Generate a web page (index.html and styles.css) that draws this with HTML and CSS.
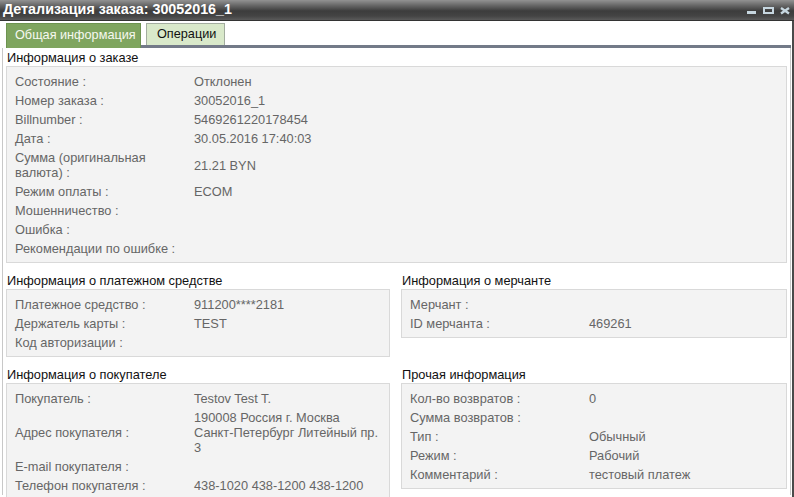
FILE: index.html
```html
<!DOCTYPE html>
<html lang="ru">
<head>
<meta charset="utf-8">
<title>Детализация заказа</title>
<link rel="stylesheet" href="styles.css">
</head>
<body>
<div class="window">
  <div class="titlebar">
    <span class="title">Детализация заказа: 30052016_1</span>
    <svg class="controls" width="48" height="20" viewBox="0 0 48 20">
      <rect x="2" y="11" width="9" height="3" fill="#c6d6df"/>
      <rect x="19" y="8" width="9" height="5" fill="none" stroke="#c6d6df" stroke-width="2"/>
      <path d="M36 8 L44 13.5 M44 8 L36 13.5" stroke="#c6d6df" stroke-width="2.4" fill="none"/>
    </svg>
  </div>
  <div class="body">
    <div class="tabstrip">
      <div class="tab-lead"></div>
      <div class="tab tab-active">Общая информация</div>
      <div class="tab-rest">
        <div class="tab-row">
          <div class="tab tab-idle">Операции</div>
        </div>
        <div class="tab-line"></div>
      </div>
    </div>
    <div class="content">
      <div class="section">
        <div class="section-title">Информация о заказе</div>
        <div class="box">
          <div class="row"><div class="label">Состояние :</div><div class="value">Отклонен</div></div>
          <div class="row"><div class="label">Номер заказа :</div><div class="value">30052016_1</div></div>
          <div class="row"><div class="label">Billnumber :</div><div class="value">5469261220178454</div></div>
          <div class="row"><div class="label">Дата :</div><div class="value">30.05.2016 17:40:03</div></div>
          <div class="row"><div class="label">Сумма (оригинальная валюта) :</div><div class="value">21.21 BYN</div></div>
          <div class="row"><div class="label">Режим оплаты :</div><div class="value">ECOM</div></div>
          <div class="row"><div class="label">Мошенничество :</div><div class="value"></div></div>
          <div class="row"><div class="label">Ошибка :</div><div class="value"></div></div>
          <div class="row"><div class="label">Рекомендации по ошибке :</div><div class="value"></div></div>
        </div>
      </div>
      <div class="cols">
        <div class="section">
          <div class="section-title">Информация о платежном средстве</div>
          <div class="box">
            <div class="row"><div class="label">Платежное средство :</div><div class="value">911200****2181</div></div>
            <div class="row"><div class="label">Держатель карты :</div><div class="value">TEST</div></div>
            <div class="row"><div class="label">Код авторизации :</div><div class="value"></div></div>
          </div>
        </div>
        <div class="section">
          <div class="section-title">Информация о мерчанте</div>
          <div class="box">
            <div class="row"><div class="label">Мерчант :</div><div class="value"></div></div>
            <div class="row"><div class="label">ID мерчанта :</div><div class="value">469261</div></div>
          </div>
        </div>
        <div class="section">
          <div class="section-title">Информация о покупателе</div>
          <div class="box">
            <div class="row"><div class="label">Покупатель :</div><div class="value">Testov Test T.</div></div>
            <div class="row"><div class="label">Адрес покупателя :</div><div class="value">190008 Россия г. Москва<br>Санкт-Петербург Литейный пр.<br>3</div></div>
            <div class="row"><div class="label">E-mail покупателя :</div><div class="value"></div></div>
            <div class="row"><div class="label">Телефон покупателя :</div><div class="value">438-1020 438-1200 438-1200</div></div>
          </div>
        </div>
        <div class="section">
          <div class="section-title">Прочая информация</div>
          <div class="box">
            <div class="row"><div class="label">Кол-во возвратов :</div><div class="value">0</div></div>
            <div class="row"><div class="label">Сумма возвратов :</div><div class="value"></div></div>
            <div class="row"><div class="label">Тип :</div><div class="value">Обычный</div></div>
            <div class="row"><div class="label">Режим :</div><div class="value">Рабочий</div></div>
            <div class="row"><div class="label">Комментарий :</div><div class="value">тестовый платеж</div></div>
          </div>
        </div>
      </div>
    </div>
  </div>
</div>
</body>
</html>
```
FILE: styles.css
```css
html, body {
  margin: 0;
  padding: 0;
  background: #fff;
}
body {
  font-family: "Liberation Sans", Arial, sans-serif;
}
.window {
  width: 794px;
  height: 497px;
  overflow: hidden;
  background: #fff;
}
.titlebar {
  height: 20px;
  display: flex;
  align-items: flex-start;
  background: linear-gradient(#929292 0%, #6a6a6a 25%, #3c3c3c 55%, #444 80%, #5a5a5a 100%);
  border-bottom: 1px solid #333;
}
.title {
  color: #fff;
  font-weight: bold;
  font-size: 14.3px;
  line-height: 16px;
  padding: 1px 0 0 3px;
}
.controls {
  margin-left: auto;
  margin-right: 1px;
  display: block;
}
.body {
  border-right: 2px solid #4a4a4a;
  height: 476px;
}
.tabstrip {
  display: flex;
  align-items: flex-end;
  height: 27px;
}
.tab-lead {
  width: 6px;
  align-self: stretch;
}
.tab {
  font-size: 12.7px;
  line-height: 15px;
  box-sizing: border-box;
}
.tab-active {
  width: 135px;
  height: 25px;
  padding: 4px 0 0 8px;
  background: #7fa55f;
  border: 1px solid #6d9350;
  border-bottom: none;
  color: #f6f8f0;
}
.tab-rest {
  flex: 1;
  display: flex;
  flex-direction: column;
}
.tab-row {
  display: flex;
  padding-left: 5px;
}
.tab-idle {
  width: 79px;
  height: 22px;
  padding: 3px 0 0 10px;
  background: #d9e9ca;
  border: 1px solid #a3ad9f;
  border-bottom: none;
  color: #111;
}
.tab-line {
  height: 3px;
  background: #737a88;
  margin-right: 1px;
}
.content {
  margin: 0 1px 0 2px;
  border-left: 1px solid #c8c8c8;
  border-right: 1px solid #c8c8c8;
  padding: 2px 3px 0 3px;
  height: 447px;
  box-sizing: border-box;
}
.section-title {
  font-size: 12.8px;
  line-height: 16px;
  height: 16px;
  color: #111;
  padding-left: 1px;
}
.box {
  background: #f3f3f3;
  border: 1px solid #d9d9d9;
  padding: 5px 8px 4px 8px;
}
.row {
  display: grid;
  grid-template-columns: 179px 1fr;
  align-items: center;
  font-size: 12.8px;
  line-height: 15px;
  padding: 2px 0;
  color: #666;
}
.label {
  padding-right: 4px;
}
.cols {
  display: grid;
  grid-template-columns: 384px 1fr;
  column-gap: 11px;
  row-gap: 10px;
  align-items: start;
  margin-top: 10px;
}
```
